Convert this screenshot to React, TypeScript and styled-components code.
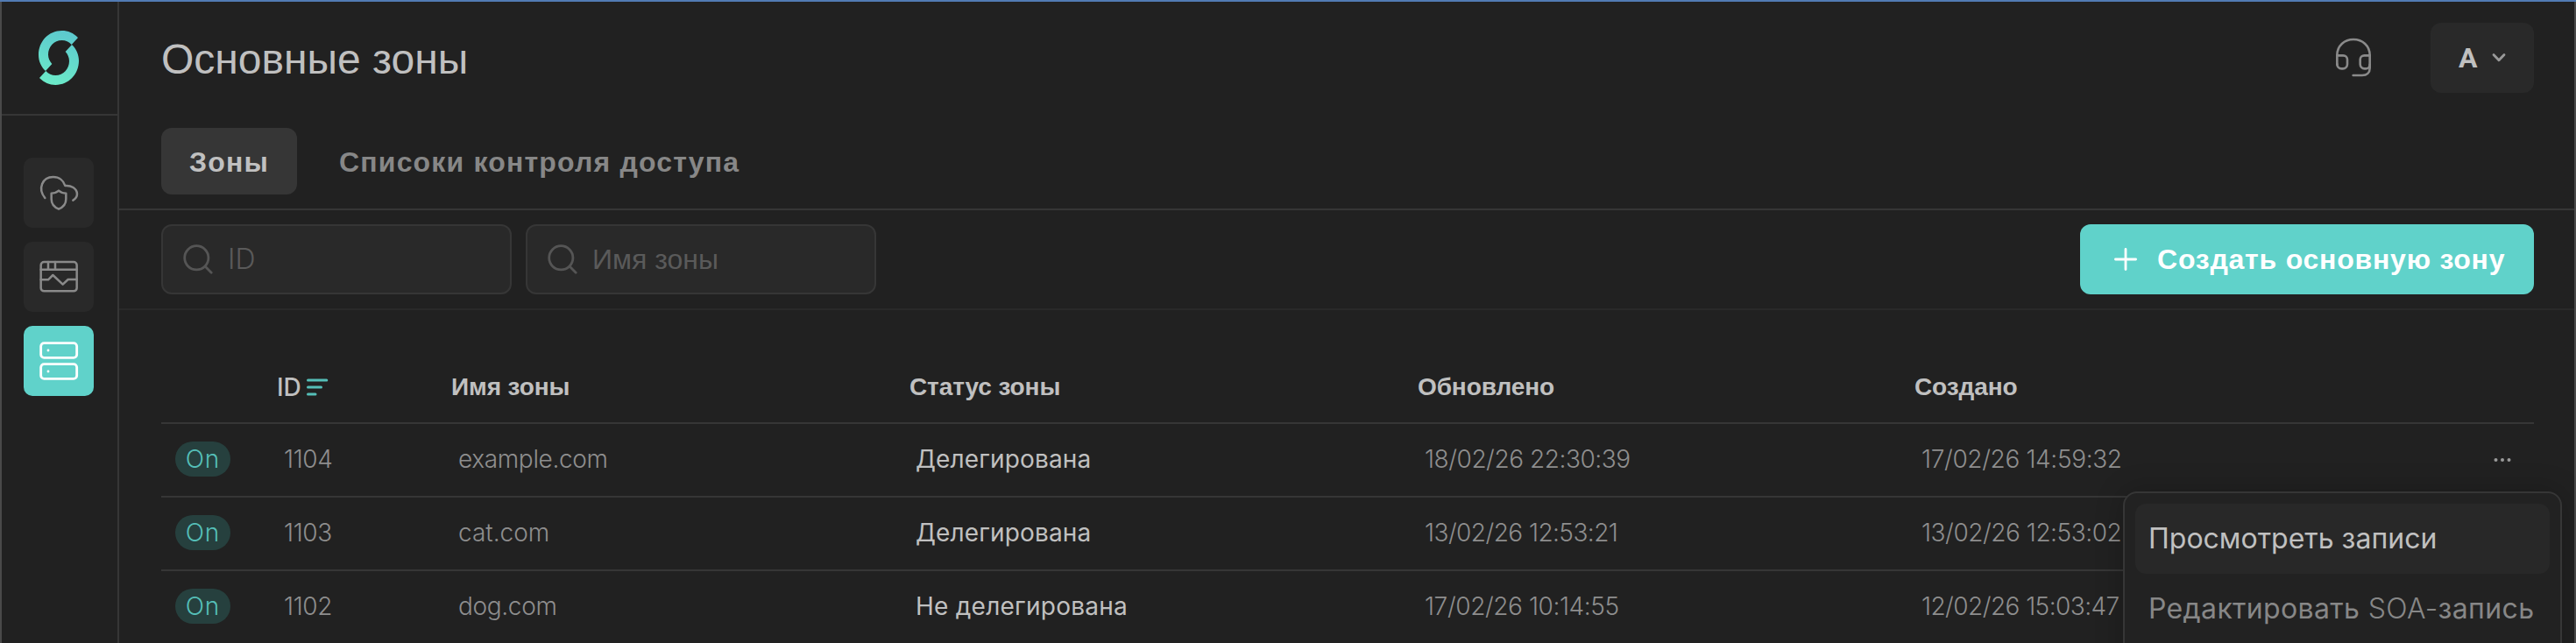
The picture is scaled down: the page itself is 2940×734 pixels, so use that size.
import React from 'react';
import styled, { createGlobalStyle } from 'styled-components';

const c = {
  bg: '#212121',
  raised: '#292929',
  line: '#363636',
  text: '#c0c0c0',
  muted: '#878787',
  faint: '#5a5a5a',
  accent: '#60d2ca',
};
const cyr = `"Liberation Sans", Arial, sans-serif`;
const lat = `Inter, "Liberation Sans", sans-serif`;

const Global = createGlobalStyle`
  * { box-sizing: border-box; }
  body { margin: 0; background: ${c.bg}; }
`;

const Shell = styled.div`
  position: relative;
  display: flex;
  width: 2940px;
  height: 734px;
  overflow: hidden;
  background: ${c.bg};
  border-top: 2px solid #527bb4;
  color: ${c.text};
  font: 400 28px ${cyr};
`;
const Edge = styled.div`
  flex: none;
  width: 2px;
  background: #4a4a4a;
`;
const Sidebar = styled.aside`
  flex: none;
  width: 134px;
  border-right: 2px solid ${c.line};
`;
const LogoBox = styled.div`
  height: 130px;
  padding-left: 42px;
  display: flex;
  align-items: center;
  border-bottom: 2px solid ${c.line};
`;
const Nav = styled.nav`
  display: flex;
  flex-direction: column;
  gap: 16px;
  padding: 48px 0 0 25px;
`;
const NavButton = styled.button<{ $active?: boolean }>`
  width: 80px;
  height: 80px;
  padding: 0;
  border: 0;
  border-radius: 10px;
  background: ${(p) => (p.$active ? c.accent : c.raised)};
  color: ${(p) => (p.$active ? '#fff' : '#8a8a8a')};
  svg { display: block; }
`;
const Main = styled.main`
  flex: 1;
  min-width: 0;
`;
const Header = styled.header`
  height: 128px;
  padding: 0 46px 0 48px;
  display: flex;
  align-items: center;
`;
const Title = styled.h1`
  flex: 1;
  margin: 0;
  padding-top: 3px;
  font-size: 48px;
  line-height: 56px;
  font-weight: 400;
`;
const HeadsetBox = styled.div`
  display: flex;
  margin-right: 67px;
  color: #8a8a8a;
`;
const UserButton = styled.button`
  width: 118px;
  height: 80px;
  padding: 0 0 0 32px;
  display: flex;
  align-items: center;
  gap: 16px;
  border: 0;
  border-radius: 12px;
  background: ${c.raised};
  color: ${c.text};
  font: 700 32px Roboto, sans-serif;
`;
const Tabs = styled.div`
  height: 110px;
  padding: 16px 0 0 48px;
  display: flex;
  align-items: flex-start;
  gap: 16px;
  border-bottom: 2px solid ${c.line};
`;
const Tab = styled.button<{ $active?: boolean }>`
  height: 76px;
  padding: 2px 32px 0;
  border: 0;
  border-radius: 12px;
  background: ${(p) => (p.$active ? c.line : 'transparent')};
  color: ${(p) => (p.$active ? c.text : c.muted)};
  font: 700 32px ${cyr};
  letter-spacing: 1.18px;
  white-space: nowrap;
`;
const Toolbar = styled.div`
  height: 114px;
  padding: 0 46px 0 48px;
  display: flex;
  align-items: center;
  gap: 16px;
  border-bottom: 2px solid ${c.raised};
`;
const Field = styled.label`
  width: 400px;
  height: 80px;
  padding-left: 23px;
  display: flex;
  align-items: center;
  gap: 17px;
  border: 2px solid ${c.line};
  border-radius: 12px;
  background: ${c.raised};
  color: #555;
`;
const Placeholder = styled.span<{ $latin?: boolean }>`
  font: ${(p) => (p.$latin ? `300 32px/40px ${lat}` : `400 32px/40px ${cyr}`)};
  color: ${c.faint};
`;
const CreateButton = styled.button`
  width: 518px;
  height: 80px;
  margin-left: auto;
  padding: 0 0 0 39px;
  display: flex;
  align-items: center;
  gap: 23px;
  border: 0;
  border-radius: 12px;
  background: ${c.accent};
  color: #fff;
  font: 700 32px ${cyr};
  letter-spacing: 0.77px;
  white-space: nowrap;
`;
const Table = styled.div`
  padding: 48px 46px 0 48px;
`;
const Row = styled.div<{ $head?: boolean }>`
  height: ${(p) => (p.$head ? 82 : 84)}px;
  display: grid;
  grid-template-columns: 132px 199px 523px 580px 567px 1fr;
  align-items: center;
  padding-bottom: ${(p) => (p.$head ? 0 : 2)}px;
  border-bottom: 2px solid ${c.line};
`;
const HeadCell = styled.div<{ $latin?: boolean }>`
  display: flex;
  align-items: center;
  gap: 6px;
  font: ${(p) => (p.$latin ? `500 28px/36px ${lat}` : `700 28px/36px ${cyr}`)};
  letter-spacing: -0.1px;
`;
const Cell = styled.div<{ $track?: number }>`
  padding-left: 8px;
  font: 300 28px/36px ${lat};
  letter-spacing: ${(p) => p.$track ?? -0.35}px;
  color: #8e8e8e;
  white-space: nowrap;
`;
const StatusCell = styled(Cell)`
  padding-left: 7px;
  font: 400 28px/36px ${lat};
  color: ${c.text};
`;
const Switch = styled.span`
  display: block;
  width: 63px;
  height: 40px;
  margin-left: 16px;
  border-radius: 20px;
  background: #26403e;
  color: #55bfb8;
  font: 300 28px/40px ${lat};
  letter-spacing: 0.8px;
  text-align: center;
`;
const LastCell = styled.div`
  display: flex;
  justify-content: space-between;
  align-items: center;
  padding-right: 26px;
  color: #9a9a9a;
`;
const Menu = styled.div`
  position: absolute;
  left: 2423px;
  top: 559px;
  width: 501px;
  height: 240px;
  padding: 12px;
  border: 2px solid ${c.line};
  border-radius: 16px;
  background: #222;
  box-shadow: 0 0 32px rgba(0, 0, 0, 0.22);
`;
const MenuItem = styled.div<{ $active?: boolean; $track: number }>`
  height: 80px;
  padding-left: 15px;
  border-radius: 12px;
  background: ${(p) => (p.$active ? '#282828' : 'transparent')};
  color: ${(p) => (p.$active ? c.text : c.muted)};
  font: 400 32px/79px ${lat};
  letter-spacing: ${(p) => p.$track}px;
  white-space: nowrap;
`;
const Latin = styled.span`
  font-weight: 300;
`;

const Logo = () => (
  <svg width="46" height="62" viewBox="132 105 138 186">
    <defs>
      <linearGradient id="logo" gradientUnits="userSpaceOnUse" x1="230" y1="105" x2="170" y2="291">
        <stop offset="0" stopColor="#5cc8ce" />
        <stop offset="1" stopColor="#6cebc8" />
      </linearGradient>
    </defs>
    <g fill="url(#logo)">
      <path d="M267 129C251 113 233 105 212 105C166 105 132 142 132 188C132 209 141 229 156 243L178 219C170 210 165 199 165 187C165 160 185 138 212 138C225 138 236 143 245 153Z" />
      <path d="M135 267C151 283 169 291 190 291C236 291 270 254 270 208C270 187 261 167 246 153L224 177C232 186 237 197 237 209C237 236 217 258 190 258C177 258 166 253 157 243Z" />
    </g>
  </svg>
);
const NavIcon = ({ width = 7.5, children }: { width?: number; children: React.ReactNode }) => (
  <svg width="80" height="80" viewBox="0 0 240 240" fill="none" stroke="currentColor" strokeWidth={width} strokeLinecap="round" strokeLinejoin="round">
    {children}
  </svg>
);
const Search = () => (
  <svg width="34" height="34" viewBox="0 0 34 34" fill="none" stroke="currentColor" strokeWidth="2.8" strokeLinecap="round">
    <circle cx="15.3" cy="15.3" r="13.6" />
    <path d="M25.3 25.3L32.2 32.2" />
  </svg>
);
const Headset = () => (
  <svg width="41" height="45.4" viewBox="78 70 123 136" fill="none" stroke="currentColor" strokeWidth="7.8" strokeLinecap="round">
    <path d="M82 162V130C82 98 107 76 138 76C169 76 194 98 194 130V174C194 190 184 199 168 199H137" />
    <path d="M82 131H103A14 14 0 0 1 117 145V161A15 15 0 0 1 102 176H97A15 15 0 0 1 82 161M194 131H175A14 14 0 0 0 161 145V161A15 15 0 0 0 176 176H180A14 14 0 0 0 194 162" />
  </svg>
);
const Dots = () => (
  <svg width="20" height="6" viewBox="0 0 20 6" fill="currentColor">
    <circle cx="2.5" cy="4" r="2" />
    <circle cx="10" cy="4" r="2" />
    <circle cx="17.5" cy="4" r="2" />
  </svg>
);

const zones = [
  { id: '1104', name: 'example.com', nt: -0.35, status: 'Делегирована', st: 0.15, updated: '18/02/26 22:30:39', ut: -0.45, created: '17/02/26 14:59:32', ct: -0.35 },
  { id: '1103', name: 'cat.com', nt: 0, status: 'Делегирована', st: 0.15, updated: '13/02/26 12:53:21', ut: -0.55, created: '13/02/26 12:53:02', ct: -0.45 },
  { id: '1102', name: 'dog.com', nt: -0.35, status: 'Не делегирована', st: 0.25, updated: '17/02/26 10:14:55', ut: -0.4, created: '12/02/26 15:03:47', ct: -0.55 },
];

export default function App() {
  return (
    <Shell>
      <Global />
      <Edge />
      <Sidebar>
        <LogoBox><Logo /></LogoBox>
        <Nav>
          <NavButton>
            <NavIcon>
              <path d="M73 138C47 106 64 66 101 66C122 66 137 79 142 96C162 94 182 105 183 124C183 134 178 141 169 146" />
              <path d="M120 113C113 119 105 122 95 122V142C95 160 105 170 120 176C135 170 145 160 145 142V122C135 122 127 119 120 113Z" />
            </NavIcon>
          </NavButton>
          <NavButton>
            <NavIcon>
              <rect x="59" y="69" width="123" height="100" rx="11" />
              <path d="M59 95H182M84 69V95M108 69V95M59 130H84L100 114L134 146L152 129H182" />
            </NavIcon>
          </NavButton>
          <NavButton $active>
            <NavIcon width={8.5}>
              <rect x="59" y="59" width="123" height="50" rx="11" />
              <rect x="59" y="131" width="123" height="50" rx="11" />
              <path d="M84 84V84.1M84 156V156.1" />
            </NavIcon>
          </NavButton>
        </Nav>
      </Sidebar>
      <Main>
        <Header>
          <Title>Основные зоны</Title>
          <HeadsetBox><Headset /></HeadsetBox>
          <UserButton>
            A
            <svg width="16" height="12" viewBox="0 0 16 12" fill="none" stroke="#999" strokeWidth="2.8" strokeLinecap="round" strokeLinejoin="round">
              <path d="M2 2.5L8 8.8L14 2.5" />
            </svg>
          </UserButton>
        </Header>
        <Tabs>
          <Tab $active>Зоны</Tab>
          <Tab>Списоки контроля доступа</Tab>
        </Tabs>
        <Toolbar>
          <Field><Search /><Placeholder $latin>ID</Placeholder></Field>
          <Field><Search /><Placeholder>Имя зоны</Placeholder></Field>
          <CreateButton>
            <svg width="26" height="26" viewBox="0 0 26 26" stroke="#fff" strokeWidth="2.8" strokeLinecap="round">
              <path d="M13 1.4V24.6M1.4 13H24.6" />
            </svg>
            Создать основную зону
          </CreateButton>
        </Toolbar>
        <Table>
          <Row $head>
            <div />
            <HeadCell $latin>
              ID
              <svg width="25" height="20" viewBox="0 0 25 20" stroke="#55bfb8" strokeWidth="3" strokeLinecap="round">
                <path d="M1.5 2H22.8M1.5 10H16.5M1.5 18H10" />
              </svg>
            </HeadCell>
            <HeadCell>Имя зоны</HeadCell>
            <HeadCell>Статус зоны</HeadCell>
            <HeadCell>Обновлено</HeadCell>
            <HeadCell>Создано</HeadCell>
          </Row>
          {zones.map((z) => (
            <Row key={z.id}>
              <Switch>On</Switch>
              <Cell>{z.id}</Cell>
              <Cell $track={z.nt}>{z.name}</Cell>
              <StatusCell $track={z.st}>{z.status}</StatusCell>
              <Cell $track={z.ut}>{z.updated}</Cell>
              <LastCell><Cell $track={z.ct}>{z.created}</Cell><Dots /></LastCell>
            </Row>
          ))}
        </Table>
      </Main>
      <Edge />
      <Menu>
        <MenuItem $active $track={0}>Просмотреть записи</MenuItem>
        <MenuItem $track={0.35}>Редактировать <Latin>SOA-</Latin>запись</MenuItem>
      </Menu>
    </Shell>
  );
}
